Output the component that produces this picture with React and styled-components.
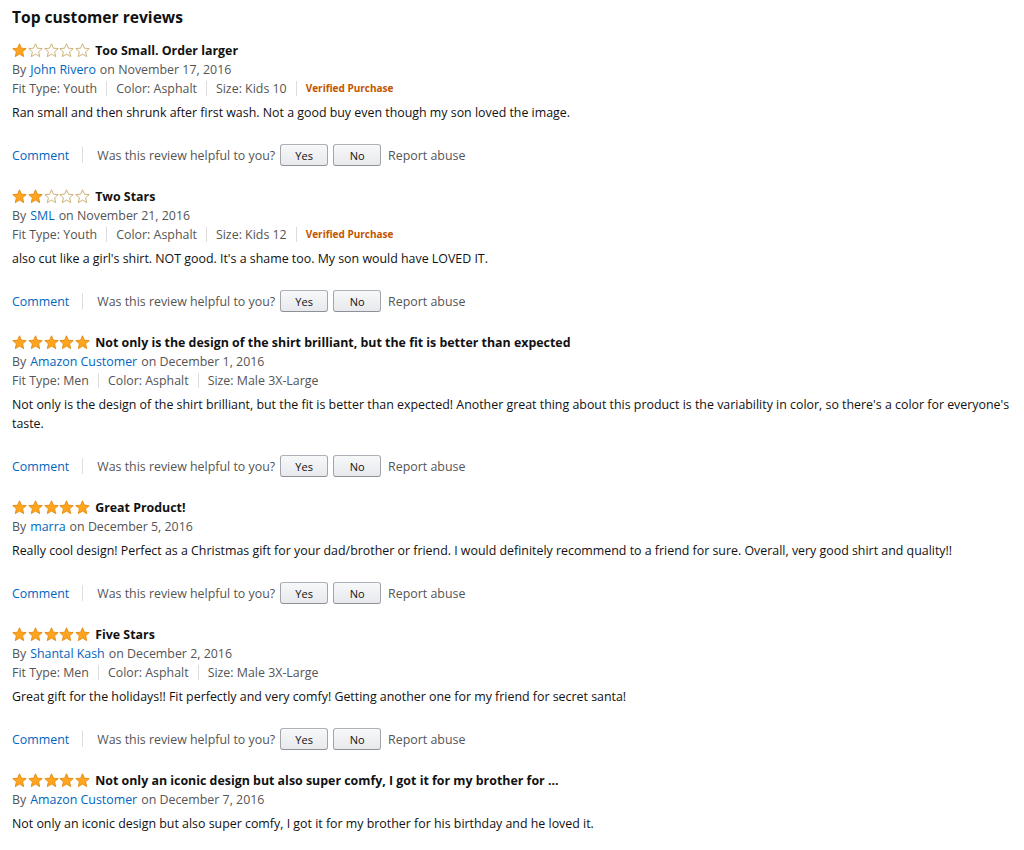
import React from "react";
import styled, { createGlobalStyle } from "styled-components";

const GlobalStyle = createGlobalStyle`
  html, body {
    margin: 0;
    padding: 0;
    background: #ffffff;
  }
  body {
    font-family: "Open Sans", "Noto Sans", "Liberation Sans", sans-serif;
    color: #111111;
  }
`;

const Page = styled.div`
  padding: 5px 0 0 12px;
`;

const Heading = styled.h2`
  margin: 0 0 11px;
  font-size: 15.6px;
  line-height: 24px;
  font-weight: 700;
  color: #111111;
`;

const Review = styled.div`
  margin-bottom: 20px;
`;

const TitleRow = styled.div`
  display: flex;
  align-items: center;
  gap: 5px;
  height: 20px;
`;

const Stars = styled.div`
  display: flex;
  gap: 0.8px;
`;

const Title = styled.span`
  font-size: 12.4px;
  font-weight: 700;
  color: #111111;
`;

const Byline = styled.div`
  font-size: 12.4px;
  line-height: 19px;
  color: #555555;
`;

const Link = styled.a`
  color: #0066c0;
  text-decoration: none;
  margin: 0 4px;
`;

const Meta = styled.div`
  display: flex;
  align-items: center;
  font-size: 12.4px;
  line-height: 19px;
  color: #555555;
`;

const MetaDivider = styled.span`
  width: 1px;
  height: 15px;
  background: #dddddd;
  margin: 0 9px;
`;

const Verified = styled.span`
  font-size: 10px;
  font-weight: 700;
  color: #c45500;
`;

const Body = styled.p`
  margin: 5px 0 0;
  font-size: 12.4px;
  line-height: 19px;
  color: #111111;
`;

const Actions = styled.div`
  display: flex;
  align-items: center;
  margin-top: 22px;
  font-size: 12.4px;
  color: #555555;
  height: 22px;
`;

const ActionLink = styled.a`
  color: #0066c0;
  text-decoration: none;
`;

const ActionDivider = styled.span`
  width: 1px;
  height: 16px;
  background: #dddddd;
  margin: 0 14px 0 13px;
`;

const VoteButton = styled.button`
  width: 48px;
  height: 22px;
  margin-left: 5px;
  padding: 0;
  border: 1px solid #adb1b8;
  border-color: #adb1b8 #a2a6ac #8d9096;
  border-radius: 3px;
  background: linear-gradient(to bottom, #f7f8fa, #e7e9ec);
  font-family: inherit;
  font-size: 11px;
  color: #111111;
  cursor: pointer;
`;

const Report = styled.span`
  margin-left: 7px;
`;

const STAR_PATH =
  "M7.5 0.8 L9.4 5.2 L14.2 5.6 L10.6 8.8 L11.7 13.6 L7.5 11.1 L3.3 13.6 L4.4 8.8 L0.8 5.6 L5.6 5.2 Z";

const Star = ({ filled }) => (
  <svg width="15" height="15" viewBox="0 0 15 15">
    <path
      d={STAR_PATH}
      fill={filled ? "#ffa41c" : "#ffffff"}
      stroke={filled ? "#e08a12" : "#c9a867"}
      strokeWidth="0.9"
      strokeLinejoin="round"
    />
  </svg>
);

const Rating = ({ value }) => (
  <Stars>
    {[1, 2, 3, 4, 5].map((i) => (
      <Star key={i} filled={i <= value} />
    ))}
  </Stars>
);

const reviews = [
  {
    rating: 1,
    title: "Too Small. Order larger",
    author: "John Rivero",
    date: "November 17, 2016",
    meta: ["Fit Type: Youth", "Color: Asphalt", "Size: Kids 10"],
    verified: true,
    body: "Ran small and then shrunk after first wash. Not a good buy even though my son loved the image.",
  },
  {
    rating: 2,
    title: "Two Stars",
    author: "SML",
    date: "November 21, 2016",
    meta: ["Fit Type: Youth", "Color: Asphalt", "Size: Kids 12"],
    verified: true,
    body: "also cut like a girl's shirt. NOT good. It's a shame too. My son would have LOVED IT.",
  },
  {
    rating: 5,
    title: "Not only is the design of the shirt brilliant, but the fit is better than expected",
    author: "Amazon Customer",
    date: "December 1, 2016",
    meta: ["Fit Type: Men", "Color: Asphalt", "Size: Male 3X-Large"],
    body: "Not only is the design of the shirt brilliant, but the fit is better than expected! Another great thing about this product is the variability in color, so there's a color for everyone's taste.",
  },
  {
    rating: 5,
    title: "Great Product!",
    author: "marra",
    date: "December 5, 2016",
    body: "Really cool design! Perfect as a Christmas gift for your dad/brother or friend. I would definitely recommend to a friend for sure. Overall, very good shirt and quality!!",
  },
  {
    rating: 5,
    title: "Five Stars",
    author: "Shantal Kash",
    date: "December 2, 2016",
    meta: ["Fit Type: Men", "Color: Asphalt", "Size: Male 3X-Large"],
    body: "Great gift for the holidays!! Fit perfectly and very comfy! Getting another one for my friend for secret santa!",
  },
  {
    rating: 5,
    title: "Not only an iconic design but also super comfy, I got it for my brother for ...",
    author: "Amazon Customer",
    date: "December 7, 2016",
    body: "Not only an iconic design but also super comfy, I got it for my brother for his birthday and he loved it.",
    noActions: true,
  },
];

const App = () => (
  <>
    <GlobalStyle />
    <Page>
      <Heading>Top customer reviews</Heading>
      {reviews.map((r, idx) => (
        <Review key={idx}>
          <TitleRow>
            <Rating value={r.rating} />
            <Title>{r.title}</Title>
          </TitleRow>
          <Byline>
            By<Link href="#">{r.author}</Link>on {r.date}
          </Byline>
          {r.meta && (
            <Meta>
              {r.meta.map((m, i) => (
                <React.Fragment key={m}>
                  {i > 0 && <MetaDivider />}
                  <span>{m}</span>
                </React.Fragment>
              ))}
              {r.verified && (
                <>
                  <MetaDivider />
                  <Verified>Verified Purchase</Verified>
                </>
              )}
            </Meta>
          )}
          <Body>{r.body}</Body>
          {!r.noActions && (
            <Actions>
              <ActionLink href="#">Comment</ActionLink>
              <ActionDivider />
              <span>Was this review helpful to you?</span>
              <VoteButton>Yes</VoteButton>
              <VoteButton>No</VoteButton>
              <Report>Report abuse</Report>
            </Actions>
          )}
        </Review>
      ))}
    </Page>
  </>
);

export default App;
